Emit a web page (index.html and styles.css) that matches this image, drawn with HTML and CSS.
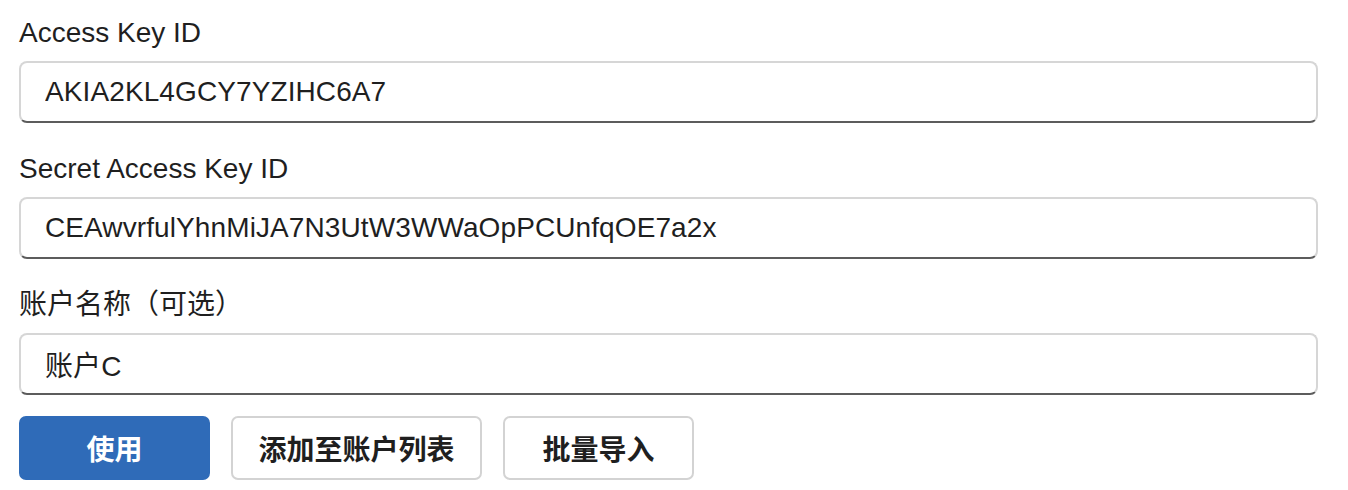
FILE: index.html
```html
<!DOCTYPE html>
<html>
<head>
  <meta charset="utf-8">
  <title>Account</title>
  <link rel="stylesheet" href="styles.css">
</head>
<body>
  <div class="form">
    <div class="field">
      <label class="label">Access Key ID</label>
      <input class="input" type="text" value="AKIA2KL4GCY7YZIHC6A7">
    </div>
    <div class="field">
      <label class="label">Secret Access Key ID</label>
      <input class="input" type="text" value="CEAwvrfulYhnMiJA7N3UtW3WWaOpPCUnfqOE7a2x">
    </div>
    <div class="field">
      <label class="label">账户名称（可选）</label>
      <input class="input" type="text" value="账户C">
    </div>
    <div class="actions">
      <button class="btn btn-primary btn-use">使用</button>
      <button class="btn btn-add">添加至账户列表</button>
      <button class="btn btn-import">批量导入</button>
    </div>
  </div>
</body>
</html>
```

FILE: styles.css
```css
* {
  margin: 0;
  padding: 0;
  box-sizing: border-box;
}
body {
  background: #fff;
  color: #1f1f1f;
  font-family: "Liberation Sans", "Noto Sans CJK SC", sans-serif;
  font-size: 28px;
}
.form {
  width: 1299px;
  margin-left: 19px;
  padding-top: 15px;
  display: flex;
  flex-direction: column;
  gap: 28px;
}
.field {
  display: flex;
  flex-direction: column;
  gap: 10px;
}
.label {
  display: block;
  line-height: 36px;
}
.input {
  width: 100%;
  height: 62px;
  padding: 0 24px;
  font: inherit;
  letter-spacing: 0.1px;
  color: #1f1f1f;
  border: 2px solid #d6d6d6;
  border-bottom-color: #5c5c5c;
  border-radius: 8px;
  background: #fff;
  outline: none;
}
.actions {
  display: flex;
  gap: 21px;
  margin-top: -7px;
}
.btn {
  height: 64px;
  font: inherit;
  font-weight: bold;
  color: #1f1f1f;
  background: #fff;
  border: 2px solid #d3d3d3;
  border-radius: 7px;
}
.btn-primary {
  background: #2f6bb8;
  border-color: #2f6bb8;
  color: #fff;
}
.btn-use {
  width: 191px;
}
.btn-add {
  width: 251px;
}
.btn-import {
  width: 191px;
}
```
